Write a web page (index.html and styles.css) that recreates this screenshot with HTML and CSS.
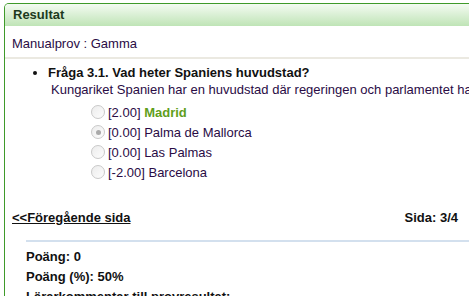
FILE: index.html
```html
<!DOCTYPE html>
<html lang="sv">
<head>
<meta charset="utf-8">
<title>Resultat</title>
<link rel="stylesheet" href="styles.css">
</head>
<body>
<div class="panel">
  <div class="panel-head">Resultat</div>
  <div class="test-name">Manualprov : Gamma</div>
  <ul class="questions">
    <li class="question">
      <div class="q-title">Fråga 3.1. Vad heter Spaniens huvudstad?</div>
      <div class="q-desc">Kungariket Spanien har en huvudstad där regeringen och parlamentet har sitt säte.</div>
      <div class="options">
        <label class="option"><span class="radio"></span><span>[2.00] <b class="correct">Madrid</b></span></label>
        <label class="option"><span class="radio checked"></span><span>[0.00] Palma de Mallorca</span></label>
        <label class="option"><span class="radio"></span><span>[0.00] Las Palmas</span></label>
        <label class="option"><span class="radio"></span><span>[-2.00] Barcelona</span></label>
      </div>
    </li>
  </ul>
  <div class="pager">
    <a class="prev" href="#">&lt;&lt;Föregående sida</a>
    <span class="page-no">Sida: 3/4</span>
  </div>
  <div class="summary">
    <div class="sum-row">Poäng: 0</div>
    <div class="sum-row">Poäng (%): 50%</div>
    <div class="sum-row">Lärarkommentar till provresultat:</div>
  </div>
</div>
</body>
</html>
```

FILE: styles.css
```css
html, body {
  margin: 0;
  padding: 0;
  background: #fff;
}
body {
  font-family: "Liberation Sans", Arial, sans-serif;
  font-size: 13px;
  color: #111;
  overflow: hidden;
}
.panel {
  margin: 3px 0 0 4px;
  width: 520px;
  border: 1px solid #3f9a2a;
  border-bottom: none;
  border-radius: 5px 0 0 0;
  height: 400px;
}
.panel-head {
  height: 22px;
  line-height: 22px;
  padding-left: 8px;
  font-weight: bold;
  color: #1d3a1d;
  background: linear-gradient(#f4fbf2, #bfe4b6);
  border-radius: 4px 0 0 0;
}
.test-name {
  height: 31px;
  line-height: 36px;
  padding-left: 7px;
  color: #2a0c45;
  border-bottom: 2px solid #ebe9e1;
}
.questions {
  margin: 0;
  padding: 5px 0 0 43px;
  list-style: disc;
}
.q-title {
  font-weight: bold;
  line-height: 17px;
}
.q-desc {
  margin-left: 3px;
  line-height: 17px;
  white-space: nowrap;
  color: #2a0c45;
}
.options {
  display: flex;
  flex-direction: column;
  gap: 4px;
  margin: 6px 0 0 43px;
}
.option {
  display: flex;
  align-items: center;
  gap: 3px;
  height: 16px;
  color: #2a0c45;
  white-space: pre;
}
.radio {
  width: 12px;
  height: 12px;
  border: 1px solid #c9c9c9;
  border-radius: 50%;
  background: linear-gradient(135deg, #ececec, #fdfdfd);
  display: flex;
  align-items: center;
  justify-content: center;
}
.radio.checked::after {
  content: "";
  width: 5px;
  height: 5px;
  border-radius: 50%;
  background: #a9a9a9;
}
.correct {
  color: #5f9e1b;
}
.pager {
  display: flex;
  justify-content: space-between;
  align-items: center;
  margin-top: 28px;
  padding: 0 11px 0 7px;
  width: 446px;
  font-weight: bold;
  height: 18px;
}
.prev {
  color: #111;
  text-decoration: underline;
}
.summary {
  margin: 14px 0 0 21px;
  border-top: 2px solid #d3e0ee;
  padding-top: 5px;
  font-weight: bold;
}
.sum-row {
  line-height: 20px;
}
```
